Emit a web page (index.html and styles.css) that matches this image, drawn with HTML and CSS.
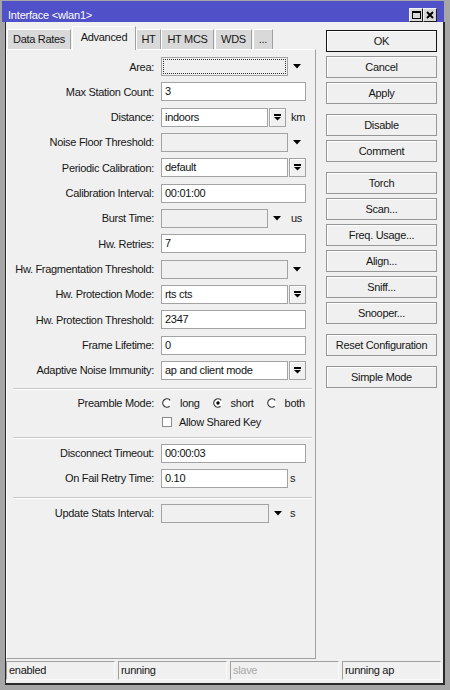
FILE: index.html
```html
<!DOCTYPE html>
<html>
<head>
<meta charset="utf-8">
<title>Interface wlan1</title>
<link rel="stylesheet" href="styles.css">
</head>
<body>
<div class="win">
  <div class="titlebar">
    <span class="ttl">Interface &lt;wlan1&gt;</span>
    <div class="tbtns">
      <span class="tbtn"><svg width="9" height="8" viewBox="0 0 9 8"><path d="M0.5 0.5h8v7h-8z M0.5 1.5h8" fill="none" stroke="#000" stroke-width="1" shape-rendering="crispEdges"/><rect x="0" y="0" width="9" height="2" fill="#000" shape-rendering="crispEdges"/></svg></span>
      <span class="tbtn"><svg width="8" height="8" viewBox="0 0 8 8"><path d="M1 1L7 7M7 1L1 7" stroke="#000" stroke-width="1.9"/></svg></span>
    </div>
  </div>
  <div class="client">
    <div class="main">
      <div class="left">
        <div class="tabs">
          <div class="tab t-dr">Data Rates</div>
          <div class="tab sel t-adv">Advanced</div>
          <div class="tab t-ht">HT</div>
          <div class="tab t-mcs">HT MCS</div>
          <div class="tab t-wds">WDS</div>
          <div class="tab t-more">...</div>
        </div>
        <div class="panel">
          <div class="sec sec-main">
            <div class="row"><div class="lbl">Area:</div><div class="ctl"><div class="fld w127 grey focus"></div><div class="tri"><svg width="8" height="5" viewBox="0 0 8 5"><polygon points="0,0 8,0 4,4.6" fill="#000"/></svg></div></div></div>
            <div class="row"><div class="lbl">Max Station Count:</div><div class="ctl"><div class="fld w145">3</div></div></div>
            <div class="row"><div class="lbl">Distance:</div><div class="ctl"><div class="fld w107">indoors</div><div class="dd"><svg width="7" height="7" viewBox="0 0 7 7"><rect x="0" y="0" width="7" height="2" fill="#000" shape-rendering="crispEdges"/><polygon points="0,3 7,3 3.5,6.6" fill="#000"/></svg></div><span class="unit">km</span></div></div>
            <div class="row"><div class="lbl">Noise Floor Threshold:</div><div class="ctl"><div class="fld w127 grey"></div><div class="tri"><svg width="8" height="5" viewBox="0 0 8 5"><polygon points="0,0 8,0 4,4.6" fill="#000"/></svg></div></div></div>
            <div class="row"><div class="lbl">Periodic Calibration:</div><div class="ctl"><div class="fld w127">default</div><div class="dd"><svg width="7" height="7" viewBox="0 0 7 7"><rect x="0" y="0" width="7" height="2" fill="#000" shape-rendering="crispEdges"/><polygon points="0,3 7,3 3.5,6.6" fill="#000"/></svg></div></div></div>
            <div class="row"><div class="lbl">Calibration Interval:</div><div class="ctl"><div class="fld w145">00:01:00</div></div></div>
            <div class="row"><div class="lbl">Burst Time:</div><div class="ctl"><div class="fld w107 grey"></div><div class="tri"><svg width="8" height="5" viewBox="0 0 8 5"><polygon points="0,0 8,0 4,4.6" fill="#000"/></svg></div><span class="unit">us</span></div></div>
            <div class="row"><div class="lbl">Hw. Retries:</div><div class="ctl"><div class="fld w145">7</div></div></div>
            <div class="row"><div class="lbl">Hw. Fragmentation Threshold:</div><div class="ctl"><div class="fld w127 grey"></div><div class="tri"><svg width="8" height="5" viewBox="0 0 8 5"><polygon points="0,0 8,0 4,4.6" fill="#000"/></svg></div></div></div>
            <div class="row"><div class="lbl">Hw. Protection Mode:</div><div class="ctl"><div class="fld w127">rts cts</div><div class="dd"><svg width="7" height="7" viewBox="0 0 7 7"><rect x="0" y="0" width="7" height="2" fill="#000" shape-rendering="crispEdges"/><polygon points="0,3 7,3 3.5,6.6" fill="#000"/></svg></div></div></div>
            <div class="row"><div class="lbl">Hw. Protection Threshold:</div><div class="ctl"><div class="fld w145">2347</div></div></div>
            <div class="row"><div class="lbl">Frame Lifetime:</div><div class="ctl"><div class="fld w145">0</div></div></div>
            <div class="row"><div class="lbl">Adaptive Noise Immunity:</div><div class="ctl"><div class="fld w127">ap and client mode</div><div class="dd"><svg width="7" height="7" viewBox="0 0 7 7"><rect x="0" y="0" width="7" height="2" fill="#000" shape-rendering="crispEdges"/><polygon points="0,3 7,3 3.5,6.6" fill="#000"/></svg></div></div></div>
          </div>
          <div class="sep sep-a"></div>
          <div class="sec sec-pre">
            <div class="row"><div class="lbl">Preamble Mode:</div>
              <div class="ctl radios">
                <span class="ropt"><svg class="radio" width="10" height="10" viewBox="0 0 10 10"><circle cx="5" cy="5" r="4.2" fill="#fff"/><path d="M8.2 2.3A4.2 4.2 0 1 0 7.6 8.3" fill="none" stroke="#3c3c3c" stroke-width="1.3"/></svg>long</span>
                <span class="ropt"><svg class="radio" width="10" height="10" viewBox="0 0 10 10"><circle cx="5" cy="5" r="4.2" fill="#fff"/><path d="M8.2 2.3A4.2 4.2 0 1 0 7.6 8.3" fill="none" stroke="#3c3c3c" stroke-width="1.3"/><circle cx="5" cy="5" r="1.7" fill="#000"/></svg>short</span>
                <span class="ropt"><svg class="radio" width="10" height="10" viewBox="0 0 10 10"><circle cx="5" cy="5" r="4.2" fill="#fff"/><path d="M8.2 2.3A4.2 4.2 0 1 0 7.6 8.3" fill="none" stroke="#3c3c3c" stroke-width="1.3"/></svg>both</span>
              </div>
            </div>
            <div class="row"><div class="lbl"></div><div class="ctl"><span class="chk"></span>Allow Shared Key</div></div>
          </div>
          <div class="sep sep-b"></div>
          <div class="sec sec-to">
            <div class="row"><div class="lbl">Disconnect Timeout:</div><div class="ctl"><div class="fld w145">00:00:03</div></div></div>
            <div class="row"><div class="lbl">On Fail Retry Time:</div><div class="ctl"><div class="fld w127">0.10</div><span class="unit u2">s</span></div></div>
          </div>
          <div class="sep sep-c"></div>
          <div class="sec">
            <div class="row"><div class="lbl">Update Stats Interval:</div><div class="ctl"><div class="fld w108 grey"></div><div class="tri"><svg width="8" height="5" viewBox="0 0 8 5"><polygon points="0,0 8,0 4,4.6" fill="#000"/></svg></div><span class="unit u4">s</span></div></div>
          </div>
        </div>
      </div>
      <div class="right">
        <div class="btn ok">OK</div>
        <div class="btn">Cancel</div>
        <div class="btn gap">Apply</div>
        <div class="btn">Disable</div>
        <div class="btn gap">Comment</div>
        <div class="btn">Torch</div>
        <div class="btn">Scan...</div>
        <div class="btn">Freq. Usage...</div>
        <div class="btn">Align...</div>
        <div class="btn">Sniff...</div>
        <div class="btn gap">Snooper...</div>
        <div class="btn gap">Reset Configuration</div>
        <div class="btn">Simple Mode</div>
      </div>
    </div>
    <div class="status">
      <div class="cell">enabled</div>
      <div class="cell">running</div>
      <div class="cell dim">slave</div>
      <div class="cell last">running ap</div>
    </div>
  </div>
</div>
</body>
</html>
```
FILE: styles.css
```css
* { box-sizing: border-box; }
html, body { margin: 0; padding: 0; }
body {
  width: 450px;
  height: 690px;
  overflow: hidden;
  background: #a6a6a6;
  font-family: "Liberation Sans", Arial, sans-serif;
  font-size: 11px;
  letter-spacing: -0.3px;
  color: #161616;
}
.win {
  height: 690px;
  display: flex;
  flex-direction: column;
  padding-top: 1px;
}
.titlebar {
  height: 21px;
  flex: none;
  margin: 0 6px 0 2px;
  background: #5050c8;
  color: #fff;
  display: flex;
  align-items: flex-start;
  justify-content: space-between;
  padding: 0 7px 0 6px;
}
.ttl {
  padding-top: 8px;
  line-height: 13px;
  letter-spacing: -0.2px;
}
.tbtns {
  display: flex;
  margin-top: 7px;
}
.tbtn {
  width: 14px;
  height: 14px;
  background: #d8d8d8;
  border: 1px solid;
  border-color: #f4f4f4 #1c1c1c #1c1c1c #f4f4f4;
  display: flex;
  align-items: center;
  justify-content: center;
}
.client {
  flex: 1;
  margin: 0 5px 5px 5px;
  border-left: 1px solid #2a2a2a;
  border-right: 2px solid #2a2a2a;
  border-bottom: 2px solid #2a2a2a;
  background: #f0f0f0;
  display: flex;
  flex-direction: column;
  padding-bottom: 3px;
  min-height: 0;
}
.main {
  flex: 1;
  display: flex;
  min-height: 0;
}
.left {
  width: 310px;
  display: flex;
  flex-direction: column;
}
.tabs {
  height: 27px;
  flex: none;
  display: flex;
  align-items: flex-end;
}
.tab {
  height: 20px;
  line-height: 19px;
  text-align: center;
  background: #d9d9d9;
  border-top: 1px solid #fff;
  border-left: 1px solid #fff;
  border-right: 1px solid #a0a0a0;
  white-space: nowrap;
  flex: none;
}
.tab.sel {
  height: 24px;
  line-height: 21px;
  background: #f0f0f0;
  margin-bottom: -1px;
  position: relative;
  z-index: 1;
}
.t-dr { margin-left: 1px; width: 64px; }
.t-adv { margin-left: 1px; width: 64px; }
.t-ht { width: 25px; }
.t-mcs { width: 53px; }
.t-wds { margin-left: 1px; width: 37px; }
.t-more { margin-left: 1px; width: 20px; }
.panel {
  flex: 1;
  background: #f0f0f0;
  border-top: 1px solid #fff;
  border-left: 1px solid #fff;
  border-right: 1px solid #a0a0a0;
  border-bottom: 1px solid #a0a0a0;
  padding-top: 7px;
}
.sec {
  display: flex;
  flex-direction: column;
  gap: 6.33px;
}
.sec-pre { gap: 0; }
.sec-to { gap: 6px; }
.row {
  height: 19px;
  display: flex;
  align-items: center;
}
.lbl {
  width: 147px;
  margin-right: 7px;
  text-align: right;
  white-space: nowrap;
  flex: none;
}
.ctl {
  display: flex;
  align-items: center;
  white-space: nowrap;
}
.fld {
  height: 19px;
  border: 1px solid #a3a3a3;
  background: #fff;
  padding-left: 3px;
  line-height: 17px;
  flex: none;
  color: #111;
}
.fld.grey { background: #f0f0f0; }
.fld.focus {
  outline: 1px dotted #333;
  outline-offset: -3px;
}
.w145 { width: 145px; }
.w127 { width: 127px; }
.w107 { width: 107px; }
.w108 { width: 108px; }
.dd {
  width: 17px;
  height: 19px;
  margin-left: 1px;
  border: 1px solid #a3a3a3;
  background: #f0f0f0;
  box-shadow: inset 1px 1px 0 #fff;
  display: flex;
  align-items: center;
  justify-content: center;
  flex: none;
}
.dd svg { display: block; }
.tri {
  width: 18px;
  height: 19px;
  display: flex;
  align-items: center;
  justify-content: center;
  flex: none;
}
.tri svg { display: block; }
.unit { margin-left: 5px; }
.unit.u2 { margin-left: 2px; }
.unit.u4 { margin-left: 3px; }
.sep {
  height: 2px;
  border-top: 1px solid #c8c8c8;
  border-bottom: 1px solid #fff;
  margin-left: 6px;
  margin-right: 3px;
}
.sep-a { margin-top: 8px; margin-bottom: 4px; }
.sep-b { margin-top: 5px; margin-bottom: 5px; }
.sep-c { margin-top: 9px; margin-bottom: 5px; }
.radios { gap: 0; }
.ropt {
  display: flex;
  align-items: center;
  margin-right: 12px;
}
.radio {
  display: block;
  margin-left: 1px;
  margin-right: 8px;
}
.chk {
  width: 10px;
  height: 10px;
  border: 1px solid #8a8a8a;
  background: #fff;
  margin-left: 1px;
  margin-right: 7px;
  flex: none;
}
.right {
  width: 111px;
  margin-left: 10px;
  padding-top: 8px;
  display: flex;
  flex-direction: column;
  flex: none;
}
.btn {
  height: 22px;
  line-height: 20px;
  text-align: center;
  border: 1px solid #969696;
  background: #f0f0f0;
  box-shadow: inset 1px 1px 0 #fff;
  margin-bottom: 4px;
  white-space: nowrap;
  flex: none;
}
.btn.ok { border-color: #151515; }
.btn.gap { margin-bottom: 10px; }
.status {
  height: 19px;
  flex: none;
  margin-top: 2px;
  display: flex;
  gap: 3px;
  padding-right: 2px;
}
.cell {
  width: 109px;
  border-top: 1px solid #a0a0a0;
  border-left: 1px solid #a0a0a0;
  border-right: 1px solid #fafafa;
  border-bottom: 1px solid #fafafa;
  padding-left: 2px;
  line-height: 17px;
  white-space: nowrap;
}
.cell.dim { color: #a8a8a8; }
.cell.last { flex: 1; width: auto; }
```
